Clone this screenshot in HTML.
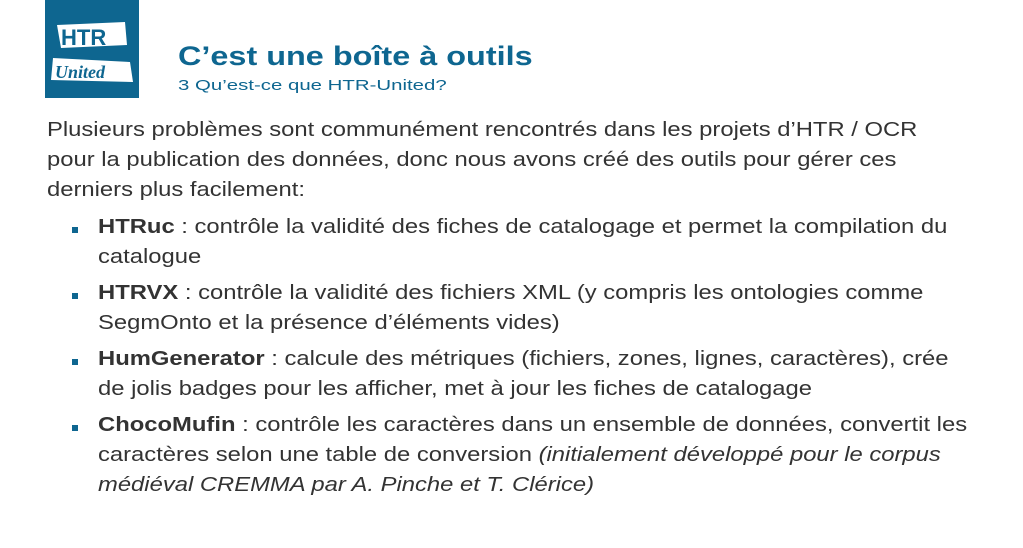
<!DOCTYPE html>
<html><head><meta charset="utf-8"><style>
body{margin:0;width:1023px;height:548px;background:#fff;position:relative;overflow:hidden;font-family:"Liberation Sans",sans-serif;color:#333}
.logo{position:absolute;left:45px;top:0;width:94px;height:98px;background:#0e6690}
.t{position:absolute;left:178px;top:41px;font-size:27px;font-weight:bold;color:#0e6690;white-space:nowrap;transform:scaleX(1.2);transform-origin:left}
.s{position:absolute;left:178px;top:77px;font-size:15px;color:#0e6690;white-space:nowrap;transform:scaleX(1.36);transform-origin:left}
.l{position:absolute;font-size:20px;white-space:nowrap;line-height:30px;transform:scaleX(1.19);transform-origin:left}
.b{position:absolute;left:72px;width:6px;height:6px;background:#0e6690}
i{font-style:italic}
</style></head><body>
<div class="logo"><svg width="94" height="98" viewBox="0 0 94 98">
<polygon points="12,25 80,22 82,45 16,48" fill="#fff"/>
<polygon points="8,58 85,62 88,82 6,80" fill="#fff"/>
<text x="16" y="45" font-family="Liberation Sans" font-size="22" font-weight="bold" fill="#0e6690">HTR</text>
<text x="10" y="78" font-family="Liberation Serif" font-style="italic" font-size="18" font-weight="bold" fill="#0e6690">United</text>
</svg></div>
<div class="t">C’est une boîte à outils</div>
<div class="s">3 Qu’est-ce que HTR-United?</div>
<div class="l" style="left:47px;top:115px">Plusieurs problèmes sont communément rencontrés dans les projets d’HTR / OCR</div>
<div class="l" style="left:47px;top:145px">pour la publication des données, donc nous avons créé des outils pour gérer ces</div>
<div class="l" style="left:47px;top:175px">derniers plus facilement:</div>
<div class="b" style="top:227px"></div>
<div class="l" style="left:98px;top:212px"><b>HTRuc</b> : contrôle la validité des fiches de catalogage et permet la compilation du</div>
<div class="l" style="left:98px;top:242px">catalogue</div>
<div class="b" style="top:293px"></div>
<div class="l" style="left:98px;top:278px"><b>HTRVX</b> : contrôle la validité des fichiers XML (y compris les ontologies comme</div>
<div class="l" style="left:98px;top:308px">SegmOnto et la présence d’éléments vides)</div>
<div class="b" style="top:359px"></div>
<div class="l" style="left:98px;top:344px"><b>HumGenerator</b> : calcule des métriques (fichiers, zones, lignes, caractères), crée</div>
<div class="l" style="left:98px;top:374px">de jolis badges pour les afficher, met à jour les fiches de catalogage</div>
<div class="b" style="top:425px"></div>
<div class="l" style="left:98px;top:410px"><b>ChocoMufin</b> : contrôle les caractères dans un ensemble de données, convertit les</div>
<div class="l" style="left:98px;top:440px">caractères selon une table de conversion <i>(initialement développé pour le corpus</i></div>
<div class="l" style="left:98px;top:470px"><i>médiéval CREMMA par A. Pinche et T. Clérice)</i></div>
</body></html>
